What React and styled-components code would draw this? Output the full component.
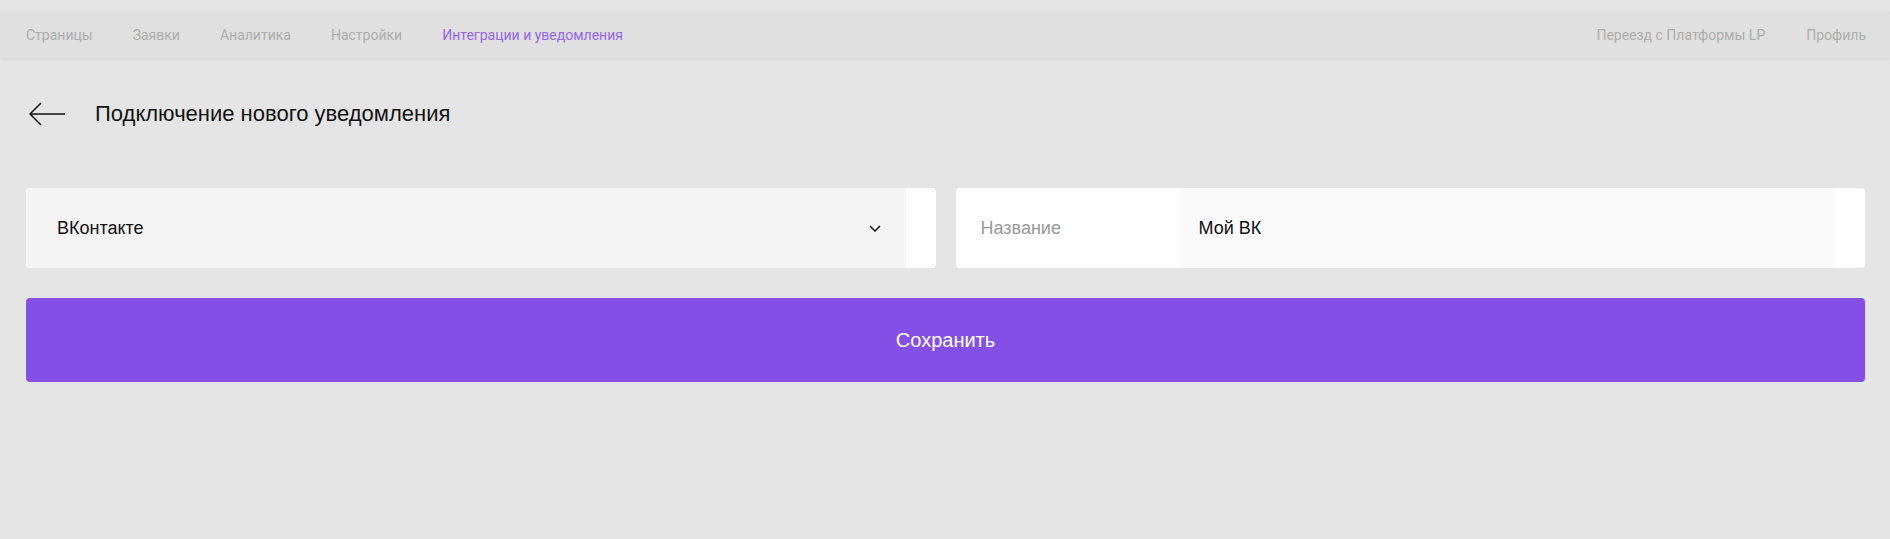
import React from "react";
import styled, { createGlobalStyle } from "styled-components";

const Global = createGlobalStyle`
  html, body {
    margin: 0;
    padding: 0;
    background: #e5e5e5;
  }
  body {
    min-height: 539px;
    font-family: "Liberation Sans", Arial, sans-serif;
  }
  * { box-sizing: border-box; }
`;

const Page = styled.div`
  padding-top: 11px;
`;

const TopBar = styled.header`
  height: 47px;
  background: #e0e0e0;
  box-shadow: 0 2px 4px rgba(0, 0, 0, 0.05);
  display: flex;
  align-items: center;
  justify-content: space-between;
  padding: 0 24px 0 26px;
  font-family: Roboto, "Liberation Sans", sans-serif;
  font-size: 14px;
`;

const NavGroup = styled.nav`
  display: flex;
  align-items: center;
  gap: ${(p) => p.$gap || 40}px;
`;

const NavLink = styled.a`
  color: ${(p) => (p.$active ? "#9466ee" : "#acacac")};
  text-decoration: none;
  cursor: pointer;
  white-space: nowrap;
`;

const Main = styled.main`
  padding: 0 25px 0 26px;
`;

const TitleRow = styled.div`
  height: 112px;
  display: flex;
  align-items: center;
  gap: 30px;
`;

const BackButton = styled.button`
  border: none;
  background: none;
  padding: 0 0 0 3px;
  display: flex;
  align-items: center;
  cursor: pointer;
`;

const Title = styled.h1`
  margin: 0;
  font-size: 22px;
  font-weight: 400;
  color: #111;
`;

const FormRow = styled.div`
  margin-top: 18px;
  display: grid;
  grid-template-columns: 1fr 1fr;
  gap: 20px;
`;

const Card = styled.div`
  height: 80px;
  background: #fff;
  border-radius: 4px;
  overflow: hidden;
  display: flex;
  padding-right: 30px;
  font-size: 18px;
`;

const SelectBox = styled.div`
  flex: 1;
  background: #f4f4f4;
  display: flex;
  align-items: center;
  justify-content: space-between;
  padding: 0 25px 0 31px;
  color: #111;
  cursor: pointer;
`;

const FieldLabel = styled.label`
  width: 224px;
  flex-shrink: 0;
  display: flex;
  align-items: center;
  padding-left: 25px;
  color: #999;
`;

const FieldInput = styled.input`
  flex: 1;
  min-width: 0;
  border: none;
  outline: none;
  background: #fafafa;
  padding: 0 0 0 19px;
  font: inherit;
  color: #111;
`;

const SaveButton = styled.button`
  margin-top: 30px;
  width: 100%;
  height: 84px;
  border: none;
  border-radius: 4px;
  background: #844fe6;
  color: #fff;
  font-family: "Liberation Sans", Arial, sans-serif;
  font-size: 20px;
  cursor: pointer;
`;

const ArrowLeft = () => (
  <svg width="36" height="24" viewBox="0 0 36 24" fill="none">
    <path d="M36 12H1.5M12 1L1 12l11 11" stroke="#111" strokeWidth="1.5" />
  </svg>
);

const Chevron = () => (
  <svg width="12" height="7" viewBox="0 0 12 7" fill="none">
    <path d="M1 1l5 5 5-5" stroke="#111" strokeWidth="1.5" />
  </svg>
);

const leftLinks = ["Страницы", "Заявки", "Аналитика", "Настройки", "Интеграции и уведомления"];
const rightLinks = ["Переезд с Платформы LP", "Профиль"];

export default function App() {
  return (
    <>
      <Global />
      <Page>
        <TopBar>
          <NavGroup>
            {leftLinks.map((l, i) => (
              <NavLink key={l} $active={i === leftLinks.length - 1}>
                {l}
              </NavLink>
            ))}
          </NavGroup>
          <NavGroup $gap={41}>
            {rightLinks.map((l) => (
              <NavLink key={l}>{l}</NavLink>
            ))}
          </NavGroup>
        </TopBar>
        <Main>
          <TitleRow>
            <BackButton aria-label="Назад">
              <ArrowLeft />
            </BackButton>
            <Title>Подключение нового уведомления</Title>
          </TitleRow>
          <FormRow>
            <Card>
              <SelectBox>
                <span>ВКонтакте</span>
                <Chevron />
              </SelectBox>
            </Card>
            <Card>
              <FieldLabel htmlFor="name">Название</FieldLabel>
              <FieldInput id="name" defaultValue="Мой ВК" />
            </Card>
          </FormRow>
          <SaveButton>Сохранить</SaveButton>
        </Main>
      </Page>
    </>
  );
}
